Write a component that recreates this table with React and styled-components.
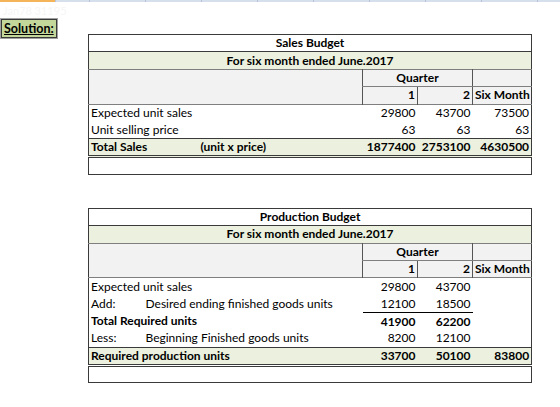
import React from 'react';
import styled, { createGlobalStyle } from 'styled-components';

const GlobalStyle = createGlobalStyle`
    html, body {
        margin: 0;
        padding: 0;
        background: #ffffff;
    }
    body {
        font-family: Lato, 'Open Sans', sans-serif;
        color: #000;
    }
`;

const Page = styled.div`
    width: 560px;
    height: 407px;
    overflow: hidden;
    display: flex;
    flex-direction: column;
`;

const ColumnStrip = styled.div`
    display: flex;
    height: 2px;
    background: #d6dfec;
`;

const StripCell = styled.div`
    flex: 0 0 ${(p) => p.$w}px;
    background: ${(p) => (p.$active ? '#f5b35a' : '#d6dfec')};
    border-right: 1px solid #b7c4d8;
`;

const GhostText = styled.div`
    height: 14px;
    padding: 3px 0 0 3px;
    font-size: 11px;
    line-height: 12px;
    color: #f6f6f6;
`;

const Badge = styled.div`
    align-self: flex-start;
    margin-left: 1px;
    padding: 0 2px;
    height: 17px;
    line-height: 17px;
    background: #c4d79b;
    border: 1px solid #3a3a3a;
    box-shadow: 0 0 0 1px #a0a0a0;
    font-size: 12.5px;
    font-weight: 700;
    text-decoration: underline;
`;

const Sheet = styled.table`
    margin-left: 88px;
    margin-top: ${(p) => p.$top}px;
    width: 443px;
    table-layout: fixed;
    border-collapse: collapse;
    border: 1px solid #3a3a3a;
    font-size: 12px;
`;

const Row = styled.tr`
    height: 17.4px;
    background: ${(p) => p.$bg || 'transparent'};
    border-top: ${(p) => (p.$lineTop ? '1px solid #3a3a3a' : 'none')};
    border-bottom: ${(p) =>
        p.$double ? '3px double #3a3a3a' : p.$line ? `1px solid ${p.$line}` : 'none'};
`;

const Cell = styled.td`
    padding: 0 2px;
    line-height: 16px;
    white-space: nowrap;
    overflow: visible;
    text-align: ${(p) => p.$align || 'left'};
    font-weight: ${(p) => (p.$bold ? 700 : 400)};
    background: ${(p) => p.$bg || 'transparent'};
    border-left: ${(p) => (p.$left ? '1px solid #555' : 'none')};
    border-right: ${(p) => (p.$right ? '1px solid #555' : 'none')};
    border-bottom: ${(p) => (p.$under ? `1px solid ${p.$under}` : 'none')};
`;

const GREEN = '#ebf1de';
const GREY = '#f2f2f2';

const Cols = () => (
    <colgroup>
        {[55, 55, 55, 55, 54, 55, 55, 59].map((w, i) => (
            <col key={i} style={{ width: w }} />
        ))}
    </colgroup>
);

const Heading = ({ title }) => (
    <>
        <Row $line="#3a3a3a">
            <Cell colSpan={8} $align="center" $bold>
                {title}
            </Cell>
        </Row>
        <Row $bg={GREEN} $line="#7f7f7f">
            <Cell colSpan={8} $align="center" $bold>
                For six month ended June.2017
            </Cell>
        </Row>
        <Row $bg={GREY}>
            <Cell colSpan={5} rowSpan={2} />
            <Cell colSpan={2} $align="center" $bold $left $right $under="#7f7f7f">
                Quarter
            </Cell>
            <Cell $under="#7f7f7f" />
        </Row>
        <Row $bg={GREY} $line="#7f7f7f">
            <Cell $align="right" $bold $left $right>
                1
            </Cell>
            <Cell $align="right" $bold $right>
                2
            </Cell>
            <Cell $align="right" $bold>
                Six Month
            </Cell>
        </Row>
    </>
);

const Values = ({ values, bold, under }) =>
    [0, 1, 2].map((i) => (
        <Cell key={i} $align="right" $bold={bold} $under={under && i < 2 ? '#000' : null}>
            {values[i]}
        </Cell>
    ));

const Line = ({ label, values, bold }) => (
    <Row>
        <Cell colSpan={5} $bold={bold}>
            {label}
        </Cell>
        <Values values={values} bold={bold} />
    </Row>
);

const PrefixLine = ({ prefix, label, values, under }) => (
    <Row>
        <Cell>{prefix}</Cell>
        <Cell colSpan={4}>{label}</Cell>
        <Values values={values} under={under} />
    </Row>
);

const Blank = () => (
    <Row>
        <Cell colSpan={8} />
    </Row>
);

const App = () => (
    <Page>
        <GlobalStyle />
        <ColumnStrip>
            <StripCell $w={55} $active />
            {[33, 55, 55, 55, 55, 55, 55, 55, 55, 55].map((w, i) => (
                <StripCell key={i} $w={w} />
            ))}
        </ColumnStrip>
        <GhostText>Jan78 31195</GhostText>
        <Badge>Solution:</Badge>

        <Sheet $top={-4}>
            <Cols />
            <tbody>
                <Heading title="Sales Budget" />
                <Line label="Expected unit sales" values={['29800', '43700', '73500']} />
                <Line label="Unit selling price" values={['63', '63', '63']} />
                <Row $bg={GREEN} $lineTop $double>
                    <Cell colSpan={2} $bold>
                        Total Sales
                    </Cell>
                    <Cell colSpan={3} $bold>
                        (unit x price)
                    </Cell>
                    <Values values={['1877400', '2753100', '4630500']} bold />
                </Row>
                <Blank />
            </tbody>
        </Sheet>

        <Sheet $top={33}>
            <Cols />
            <tbody>
                <Heading title="Production Budget" />
                <Line label="Expected unit sales" values={['29800', '43700', '']} />
                <PrefixLine
                    prefix="Add:"
                    label="Desired ending finished goods units"
                    values={['12100', '18500', '']}
                    under
                />
                <Line label="Total Required units" values={['41900', '62200', '']} bold />
                <PrefixLine
                    prefix="Less:"
                    label="Beginning Finished goods units"
                    values={['8200', '12100', '']}
                />
                <Row $bg={GREEN} $lineTop $double>
                    <Cell colSpan={5} $bold>
                        Required production units
                    </Cell>
                    <Values values={['33700', '50100', '83800']} bold />
                </Row>
                <Blank />
            </tbody>
        </Sheet>
    </Page>
);

export default App;
